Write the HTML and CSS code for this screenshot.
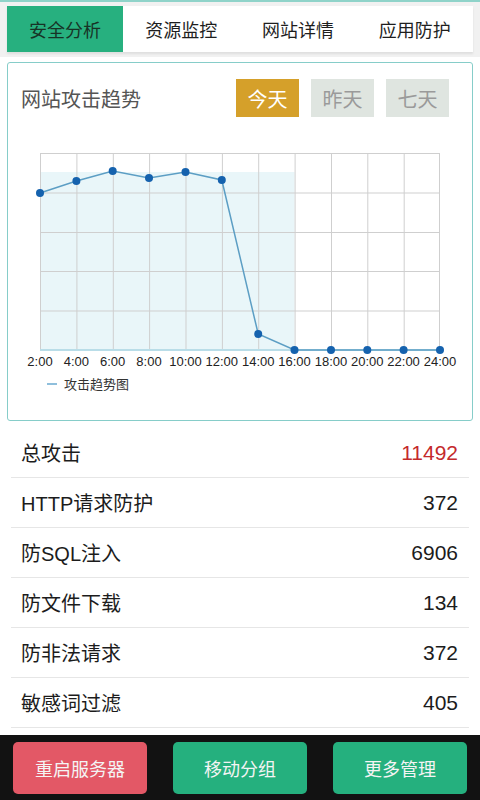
FILE: index.html
```html
<!DOCTYPE html>
<html lang="zh-CN">
<head>
  <meta charset="UTF-8">
  <meta name="viewport" content="width=device-width, initial-scale=1.0">
  <title>安全分析</title>
  <link rel="stylesheet" href="styles.css">
</head>
<body>

  <div class="top-line"></div>

  <div class="tab-wrap">
    <nav class="tabs">
      <div class="tab active">安全分析</div>
      <div class="tab">资源监控</div>
      <div class="tab">网站详情</div>
      <div class="tab">应用防护</div>
    </nav>
  </div>

  <section class="chart-card">
    <div class="chart-head">
      <h2 class="chart-title">网站攻击趋势</h2>
      <div class="range">
        <button class="range-btn on">今天</button>
        <button class="range-btn">昨天</button>
        <button class="range-btn">七天</button>
      </div>
    </div>

    <!-- svg coords: x = page x - 8, y = page y - 140 -->
    <svg class="chart" width="464" height="260" viewBox="0 0 464 260">
      <rect x="32" y="32" width="254.5" height="178" fill="#e9f6f9"/>
      <g stroke="#cfcfcf" stroke-width="1">
        <line x1="32" y1="13.5" x2="432" y2="13.5"/>
        <line x1="32" y1="53" x2="432" y2="53"/>
        <line x1="32" y1="92.5" x2="432" y2="92.5"/>
        <line x1="32" y1="131.5" x2="432" y2="131.5"/>
        <line x1="32" y1="171" x2="432" y2="171"/>
        <line x1="32.5" y1="13" x2="32.5" y2="210"/>
        <line x1="68.9" y1="13" x2="68.9" y2="210"/>
        <line x1="105.3" y1="13" x2="105.3" y2="210"/>
        <line x1="141.6" y1="13" x2="141.6" y2="210"/>
        <line x1="178" y1="13" x2="178" y2="210"/>
        <line x1="214.4" y1="13" x2="214.4" y2="210"/>
        <line x1="250.7" y1="13" x2="250.7" y2="210"/>
        <line x1="287.1" y1="13" x2="287.1" y2="210"/>
        <line x1="323.5" y1="13" x2="323.5" y2="210"/>
        <line x1="359.8" y1="13" x2="359.8" y2="210"/>
        <line x1="396.2" y1="13" x2="396.2" y2="210"/>
        <line x1="431.5" y1="13" x2="431.5" y2="210"/>
      </g>
      <line x1="32" y1="210" x2="432" y2="210" stroke="#b9dde8" stroke-width="2"/>
      <polyline fill="none" stroke="#5c9ec4" stroke-width="1.5"
        points="32,53 68.4,41 104.7,31 141,38 177.5,32 213.8,40 250.2,194 286.5,210 323,210 359.3,210 395.6,210 432,210"/>
      <g fill="#1562ae">
        <circle cx="32" cy="53" r="4"/>
        <circle cx="68.4" cy="41" r="4"/>
        <circle cx="104.7" cy="31" r="4"/>
        <circle cx="141" cy="38" r="4"/>
        <circle cx="177.5" cy="32" r="4"/>
        <circle cx="213.8" cy="40" r="4"/>
        <circle cx="250.2" cy="194" r="4"/>
        <circle cx="286.5" cy="210" r="4"/>
        <circle cx="323" cy="210" r="4"/>
        <circle cx="359.3" cy="210" r="4"/>
        <circle cx="395.6" cy="210" r="4"/>
        <circle cx="432" cy="210" r="4"/>
      </g>
      <g class="axis" text-anchor="middle">
        <text x="32" y="226">2:00</text>
        <text x="68.4" y="226">4:00</text>
        <text x="104.7" y="226">6:00</text>
        <text x="141" y="226">8:00</text>
        <text x="177.5" y="226">10:00</text>
        <text x="213.8" y="226">12:00</text>
        <text x="250.2" y="226">14:00</text>
        <text x="286.5" y="226">16:00</text>
        <text x="323" y="226">18:00</text>
        <text x="359.3" y="226">20:00</text>
        <text x="395.6" y="226">22:00</text>
        <text x="432" y="226">24:00</text>
      </g>
      <line x1="39" y1="244" x2="49" y2="244" stroke="#6aaad0" stroke-width="1.5"/>
      <text class="legend" x="56" y="249">攻击趋势图</text>
    </svg>
  </section>

  <ul class="stats">
    <li><span>总攻击</span><span class="num red">11492</span></li>
    <li><span>HTTP请求防护</span><span class="num">372</span></li>
    <li><span>防SQL注入</span><span class="num">6906</span></li>
    <li><span>防文件下载</span><span class="num">134</span></li>
    <li><span>防非法请求</span><span class="num">372</span></li>
    <li><span>敏感词过滤</span><span class="num">405</span></li>
  </ul>

  <footer class="actions">
    <button class="act red-btn">重启服务器</button>
    <button class="act">移动分组</button>
    <button class="act">更多管理</button>
  </footer>

</body>
</html>
```

FILE: styles.css
```css
* {
  margin: 0;
  padding: 0;
  box-sizing: border-box;
}

body {
  font-family: 'Liberation Sans', 'Noto Sans CJK SC', sans-serif;
  background: #fff;
  color: #222;
  width: 480px;
  height: 800px;
  overflow: hidden;
}

.top-line {
  height: 2px;
  background: #8fd3c9;
}

.tab-wrap {
  background: #f1f1f1;
  padding: 4px 7px 5px;
}

.tabs {
  display: flex;
  height: 46px;
  background: #fff;
  box-shadow: 0 2px 2px rgba(0, 0, 0, 0.08);
}

.tab {
  flex: 1;
  display: flex;
  align-items: center;
  justify-content: center;
  font-family: 'Noto Sans CJK SC', sans-serif;
  font-size: 18px;
  color: #1e1e1e;
}

.tab.active {
  flex: 0 0 116px;
  background: #27b07f;
  color: #173326;
}

.chart-card {
  margin: 5px 7px 0;
  border: 1px solid #86cdc9;
  border-radius: 3px;
  background: #fff;
  padding-bottom: 20px;
}

.chart-head {
  display: flex;
  align-items: center;
  justify-content: space-between;
  padding: 16px 23px 0 13px;
  margin-bottom: 23px;
}

.chart-title {
  font-family: 'Noto Sans CJK SC', sans-serif;
  font-size: 20px;
  font-weight: normal;
  color: #555;
}

.range {
  display: flex;
  gap: 12px;
}

.range-btn {
  width: 63px;
  height: 38px;
  border: none;
  background: #dfe5e0;
  color: #9a9a9a;
  font-family: 'Noto Sans CJK SC', sans-serif;
  font-size: 20px;
}

.range-btn.on {
  background: #d5a02a;
  color: #fff;
}

.chart {
  display: block;
}

.axis {
  font-family: 'Liberation Sans', sans-serif;
  font-size: 13px;
  fill: #222;
}

.legend {
  font-family: 'Noto Sans CJK SC', sans-serif;
  font-size: 13px;
  fill: #333;
}

.stats {
  list-style: none;
  margin: 7px 11px 0;
}

.stats li {
  display: flex;
  justify-content: space-between;
  align-items: center;
  height: 50px;
  padding: 0 11px 0 10px;
  border-bottom: 1px solid #e6e6e6;
  font-family: 'Liberation Sans', 'Noto Sans CJK SC', sans-serif;
  font-size: 20px;
  color: #1c1c1c;
}

.stats .num {
  font-size: 21px;
}

.stats .num.red {
  color: #c42a2c;
}

.actions {
  margin-top: 7px;
  height: 65px;
  background: #121212;
  display: flex;
  gap: 26px;
  padding: 7px 13px 6px;
}

.act {
  width: 134px;
  border: none;
  border-radius: 5px;
  background: #25b07e;
  color: #f4f4f4;
  font-family: 'Noto Sans CJK SC', sans-serif;
  font-size: 18px;
}

.act.red-btn {
  background: #e35866;
}
```
